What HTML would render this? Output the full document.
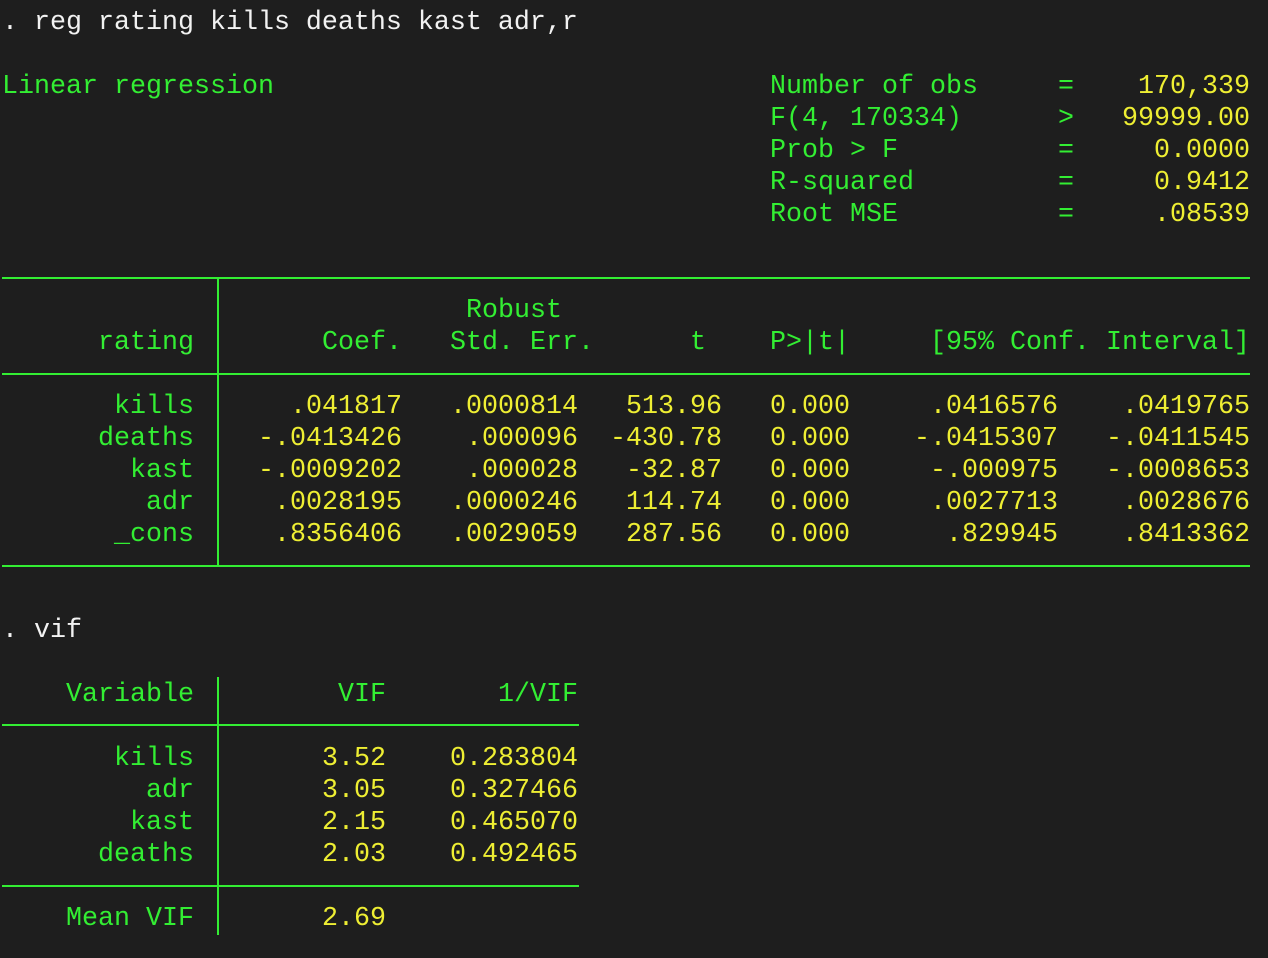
<!DOCTYPE html>
<html><head><meta charset="utf-8"><style>
html,body{margin:0;padding:0;background:#1e1e1e;}
body{width:1268px;height:958px;position:relative;overflow:hidden;font-family:"Liberation Mono",monospace;font-size:26.67px;}
.t{position:absolute;white-space:pre;line-height:32px;height:32px;margin-top:2px;}
.w{color:#f2f2f2}.g{color:#33ee33}.y{color:#eeee33}
.r{text-align:right}
.h{position:absolute;height:2px;background:#33ee33}
.v{position:absolute;width:2px;background:#33ee33}
</style></head><body>
<div class="t w" style="left:2px;top:5px">. reg rating kills deaths kast adr,r</div>
<div class="t g" style="left:2px;top:69px">Linear regression</div>

<div class="t g" style="left:770px;top:69px">Number of obs</div><div class="t g" style="left:1058px;top:69px">=</div><div class="t y r" style="left:1050px;width:200px;top:69px">170,339</div>
<div class="t g" style="left:770px;top:101px">F(4, 170334)</div><div class="t g" style="left:1058px;top:101px">&gt;</div><div class="t y r" style="left:1050px;width:200px;top:101px">99999.00</div>
<div class="t g" style="left:770px;top:133px">Prob &gt; F</div><div class="t g" style="left:1058px;top:133px">=</div><div class="t y r" style="left:1050px;width:200px;top:133px">0.0000</div>
<div class="t g" style="left:770px;top:165px">R-squared</div><div class="t g" style="left:1058px;top:165px">=</div><div class="t y r" style="left:1050px;width:200px;top:165px">0.9412</div>
<div class="t g" style="left:770px;top:197px">Root MSE</div><div class="t g" style="left:1058px;top:197px">=</div><div class="t y r" style="left:1050px;width:200px;top:197px">.08539</div>

<div class="h" style="left:2px;width:1248px;top:277px"></div>
<div class="v" style="left:217px;top:277px;height:290px"></div>
<div class="t g" style="left:466px;top:293px">Robust</div>
<div class="t g r" style="left:2px;width:192px;top:325px">rating</div>
<div class="t g r" style="left:210px;width:192px;top:325px">Coef.</div>
<div class="t g" style="left:450px;top:325px">Std. Err.</div>
<div class="t g" style="left:690px;top:325px">t</div>
<div class="t g" style="left:770px;top:325px">P&gt;|t|</div>
<div class="t g" style="left:930px;top:325px">[95% Conf. Interval]</div>
<div class="h" style="left:2px;width:1248px;top:373px"></div>

<div class="t g r" style="left:2px;width:192px;top:389px">kills</div><div class="t y r" style="left:210px;width:192px;top:389px">.041817</div><div class="t y r" style="left:402px;width:176px;top:389px">.0000814</div><div class="t y r" style="left:578px;width:144px;top:389px">513.96</div><div class="t y" style="left:770px;top:389px">0.000</div><div class="t y r" style="left:850px;width:208px;top:389px">.0416576</div><div class="t y r" style="left:1058px;width:192px;top:389px">.0419765</div>
<div class="t g r" style="left:2px;width:192px;top:421px">deaths</div><div class="t y r" style="left:210px;width:192px;top:421px">-.0413426</div><div class="t y r" style="left:402px;width:176px;top:421px">.000096</div><div class="t y r" style="left:578px;width:144px;top:421px">-430.78</div><div class="t y" style="left:770px;top:421px">0.000</div><div class="t y r" style="left:850px;width:208px;top:421px">-.0415307</div><div class="t y r" style="left:1058px;width:192px;top:421px">-.0411545</div>
<div class="t g r" style="left:2px;width:192px;top:453px">kast</div><div class="t y r" style="left:210px;width:192px;top:453px">-.0009202</div><div class="t y r" style="left:402px;width:176px;top:453px">.000028</div><div class="t y r" style="left:578px;width:144px;top:453px">-32.87</div><div class="t y" style="left:770px;top:453px">0.000</div><div class="t y r" style="left:850px;width:208px;top:453px">-.000975</div><div class="t y r" style="left:1058px;width:192px;top:453px">-.0008653</div>
<div class="t g r" style="left:2px;width:192px;top:485px">adr</div><div class="t y r" style="left:210px;width:192px;top:485px">.0028195</div><div class="t y r" style="left:402px;width:176px;top:485px">.0000246</div><div class="t y r" style="left:578px;width:144px;top:485px">114.74</div><div class="t y" style="left:770px;top:485px">0.000</div><div class="t y r" style="left:850px;width:208px;top:485px">.0027713</div><div class="t y r" style="left:1058px;width:192px;top:485px">.0028676</div>
<div class="t g r" style="left:2px;width:192px;top:517px">_cons</div><div class="t y r" style="left:210px;width:192px;top:517px">.8356406</div><div class="t y r" style="left:402px;width:176px;top:517px">.0029059</div><div class="t y r" style="left:578px;width:144px;top:517px">287.56</div><div class="t y" style="left:770px;top:517px">0.000</div><div class="t y r" style="left:850px;width:208px;top:517px">.829945</div><div class="t y r" style="left:1058px;width:192px;top:517px">.8413362</div>
<div class="h" style="left:2px;width:1248px;top:565px"></div>

<div class="t w" style="left:2px;top:613px">. vif</div>
<div class="v" style="left:217px;top:677px;height:258px"></div>
<div class="t g r" style="left:2px;width:192px;top:677px">Variable</div><div class="t g r" style="left:210px;width:176px;top:677px">VIF</div><div class="t g r" style="left:386px;width:192px;top:677px">1/VIF</div>
<div class="h" style="left:2px;width:577px;top:724px"></div>
<div class="t g r" style="left:2px;width:192px;top:741px">kills</div><div class="t y r" style="left:210px;width:176px;top:741px">3.52</div><div class="t y r" style="left:386px;width:192px;top:741px">0.283804</div>
<div class="t g r" style="left:2px;width:192px;top:773px">adr</div><div class="t y r" style="left:210px;width:176px;top:773px">3.05</div><div class="t y r" style="left:386px;width:192px;top:773px">0.327466</div>
<div class="t g r" style="left:2px;width:192px;top:805px">kast</div><div class="t y r" style="left:210px;width:176px;top:805px">2.15</div><div class="t y r" style="left:386px;width:192px;top:805px">0.465070</div>
<div class="t g r" style="left:2px;width:192px;top:837px">deaths</div><div class="t y r" style="left:210px;width:176px;top:837px">2.03</div><div class="t y r" style="left:386px;width:192px;top:837px">0.492465</div>
<div class="h" style="left:2px;width:577px;top:885px"></div>
<div class="t g r" style="left:2px;width:192px;top:901px">Mean VIF</div><div class="t y r" style="left:210px;width:176px;top:901px">2.69</div>
</body></html>
